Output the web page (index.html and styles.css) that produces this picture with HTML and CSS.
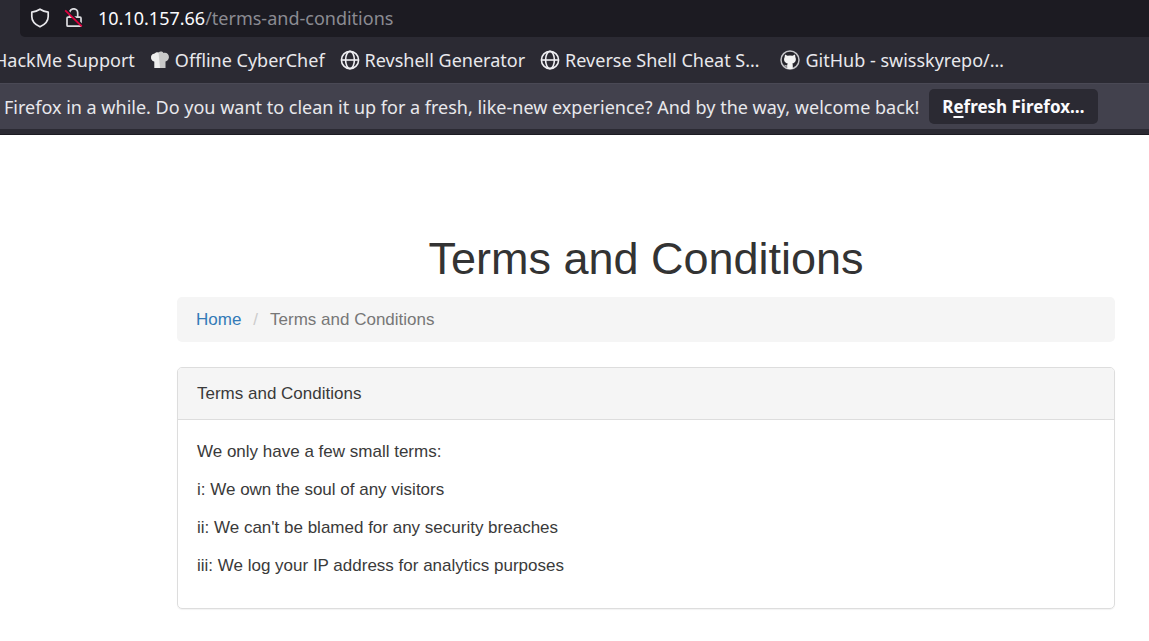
FILE: index.html
```
<!DOCTYPE html>
<html lang="en">
<head>
<meta charset="utf-8">
<title>Terms and Conditions</title>
<link rel="stylesheet" href="styles.css">
</head>
<body>
<header class="chrome">
  <div class="urlbar">
    <svg class="icon shield" viewBox="0 0 20 20"><path d="M10 1.2c2.500 1.700 5 2.600 8.200 2.900v4.400c0 4.800-3 8-8.200 10.300C4.800 16.500 1.800 13.300 1.800 8.500V4.100C5 3.800 7.500 2.900 10 1.200z" fill="none" stroke="#e8e8ec" stroke-width="1.700" stroke-linejoin="round"/></svg>
    <svg class="icon" viewBox="0 0 20 20"><path d="M5.700 9V4.800a4 4 0 0 1 8 0V9M4 9.200h12q1 0 1 1v7q0 1-1 1H4q-1 0-1-1v-7q0-1 1-1z" fill="none" stroke="#dcdce0" stroke-width="1.700" stroke-linejoin="round"/><path d="M2.300 1.700l15.600 15" stroke="#1c1b22" stroke-width="2"/><path d="M1.200 2.300l16.600 16" stroke="#e2003f" stroke-width="1.800"/></svg>
    <span class="url"><span class="host">10.10.157.66</span>/terms-and-conditions</span>
  </div>
  <nav class="bookmarks">
    <a class="bookmark cut" href="#">HackMe Support</a>
    <a class="bookmark" href="#"><svg class="icon" viewBox="0 0 20 20"><path d="M4.500 11.500C-.2 10.500.2 4 4.500 3.800 5.500 2.200 7.500 2.200 8.500 2.600 10 1 12.500 1.500 13.500 3 17 2 19.500 5 18.800 8c-.4 2-1.500 3-3.300 3.500V18h-11z" fill="#c9c9c9"/><path d="M4.500 11.500C-.2 10.500.2 4 4.500 3.800 5.500 2.200 7.500 2.200 8.500 2.600L10 18H4.500z" fill="#eee"/></svg>Offline CyberChef</a>
    <a class="bookmark" href="#"><svg class="icon" viewBox="0 0 20 20"><g fill="none" stroke="#f0f0f4" stroke-width="1.600"><circle cx="10" cy="10" r="8.600"/><ellipse cx="10" cy="10" rx="4.400" ry="8.600"/><path d="M1.400 10h17.200"/></g></svg>Revshell Generator</a>
    <a class="bookmark" href="#"><svg class="icon" viewBox="0 0 20 20"><g fill="none" stroke="#f0f0f4" stroke-width="1.600"><circle cx="10" cy="10" r="8.600"/><ellipse cx="10" cy="10" rx="4.400" ry="8.600"/><path d="M1.400 10h17.200"/></g></svg>Reverse Shell Cheat S…</a>
    <a class="bookmark github" href="#"><svg class="icon" viewBox="0 0 20 20"><circle cx="10" cy="10" r="9" fill="#25242b" stroke="#c4c4c8" stroke-width="1.500"/><path d="M5 4.500l2.500 1.200q2.500-.6 5 0L15 4.500l.4 2.800c1.200 2.500.2 5.700-3.100 6.200.5.600.5 1.500.5 5.200q-2.800.8-5.600 0v-2.200c-1.700.3-2.300-.5-3-1.700 1 .2 1.600 1 3 .7.100-1 .2-1.600.6-2-3.400-.5-4.500-3.700-3.200-6.200z" fill="#f4f4f4"/></svg>GitHub - swisskyrepo/…</a>
  </nav>
  <div class="notice">
    <span>Firefox in a while. Do you want to clean it up for a fresh, like-new experience? And by the way, welcome back!</span>
    <button class="refresh" type="button">R<u>e</u>fresh Firefox…</button>
  </div>
</header>
<main class="page">
  <h1 class="title">Terms and Conditions</h1>
  <nav aria-label="Breadcrumb">
    <ol class="breadcrumb">
      <li><a href="#">Home</a></li>
      <li class="current">Terms and Conditions</li>
    </ol>
  </nav>
  <section class="panel">
    <div class="panel-heading">Terms and Conditions</div>
    <div class="panel-body">
      <p>We only have a few small terms:</p>
      <p>i: We own the soul of any visitors</p>
      <p>ii: We can't be blamed for any security breaches</p>
      <p>iii: We log your IP address for analytics purposes</p>
    </div>
  </section>
</main>
</body>
</html>
```
FILE: styles.css
```
* { box-sizing: border-box; }
body {
  margin: 0;
  background: #fff;
  color: #3a3a3a;
  font: 17px/25px "Liberation Sans", Arial, sans-serif;
}
.chrome {
  background: #2b2a33;
  color: #e8e8ec;
  font: 18px/24px "Noto Sans", "Open Sans", sans-serif;
  white-space: nowrap;
  overflow: hidden;
  padding-bottom: 5px;
  border-bottom: 1px solid #1c1b22;
}
.icon { width: 20px; height: 20px; flex: none; }
.urlbar {
  display: flex;
  align-items: center;
  height: 37px;
  margin-left: 20px;
  padding: 0 0 2px 10px;
  gap: 14px;
  background: #1c1b22;
  border-bottom-left-radius: 5px;
}
.url { color: #8b8b92; }
.host { color: #fbfbfe; }
.bookmarks {
  display: flex;
  align-items: center;
  height: 46px;
  gap: 15px;
}
.bookmark {
  display: flex;
  align-items: center;
  gap: 5px;
  color: inherit;
  text-decoration: none;
}
.cut { margin-left: -6px; }
.github { margin-left: 6px; }
.notice {
  display: flex;
  align-items: center;
  gap: 10px;
  height: 46px;
  padding-left: 4px;
  background: #42414d;
  border-top: 1px solid #4a4955;
}
.refresh {
  height: 35px;
  padding: 0 13px;
  border: 0;
  border-radius: 5px;
  background: #2b2a33;
  color: #fbfbfe;
  font: bold 17px/24px "Noto Sans", "Open Sans", sans-serif;
}
.refresh u { text-underline-offset: 3px; text-decoration-thickness: 2px; }
.page { padding: 99px 34px 32px 177px; }
.title {
  margin: 0 0 13px;
  color: #333;
  font-size: 45px;
  font-weight: 500;
  line-height: 50px;
  text-align: center;
}
.breadcrumb {
  display: flex;
  list-style: none;
  margin: 0 0 25px;
  padding: 10px 19px;
  border-radius: 5px;
  background: #f5f5f5;
}
.breadcrumb a { color: #337ab7; text-decoration: none; }
.current { color: #777; }
.current::before { content: "/"; padding: 0 12px; color: #ccc; }
.panel {
  border: 1px solid #ddd;
  border-radius: 5px;
  box-shadow: 0 1px 1px #0000000d;
}
.panel-heading {
  padding: 13px 19px;
  background: #f5f5f5;
  border-bottom: 1px solid #ddd;
  border-radius: 4px 4px 0 0;
}
.panel-body { padding: 19px 19px 17px; }
.panel-body p { margin: 0 0 13px; }
```
